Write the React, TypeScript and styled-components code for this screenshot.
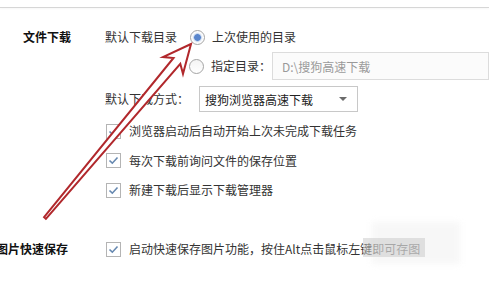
import styled, { createGlobalStyle } from "styled-components";

const GlobalStyle = createGlobalStyle`
  html, body {
    margin: 0;
    padding: 0;
    background: #fff;
  }
  body {
    font-family: "Noto Sans CJK SC", "Noto Sans", "Liberation Sans", sans-serif;
    font-size: 12px;
    color: #333;
  }
`;

const Page = styled.div`
  position: relative;
  width: 497px;
  height: 290px;
  overflow: hidden;
  background: #fff;
`;

const TopRule = styled.div`
  margin-top: 7px;
  width: 489px;
  height: 1px;
  background: #d6d6d6;
  box-shadow: 0 1px 2px rgba(0, 0, 0, 0.05);
`;

const Section = styled.div<{ $top: number }>`
  display: grid;
  grid-template-columns: 105px 1fr;
  margin-top: ${(p) => p.$top}px;
`;

const SectionLabel = styled.div<{ $indent: number }>`
  height: 28px;
  line-height: 28px;
  margin-left: ${(p) => p.$indent}px;
  font-weight: bold;
  color: #111;
  white-space: nowrap;
`;

const Column = styled.div`
  display: flex;
  flex-direction: column;
`;

const Row = styled.div<{ $h: number; $top?: number }>`
  display: flex;
  align-items: center;
  height: ${(p) => p.$h}px;
  margin-top: ${(p) => p.$top ?? 0}px;
  white-space: nowrap;
`;

const Text = styled.span<{ $gap?: number }>`
  margin-right: ${(p) => p.$gap ?? 0}px;
  line-height: 1;
`;

const Radio = styled.span<{ $on?: boolean; $left?: number }>`
  box-sizing: border-box;
  width: 15px;
  height: 15px;
  border-radius: 50%;
  border: 1px solid #a4a4a4;
  background: ${(p) =>
    p.$on
      ? "radial-gradient(circle, #5a86cc 0 3px, #a9c1e6 3.5px, #eef2f8 4.5px, #fff 6px)"
      : "linear-gradient(#f4f4f4, #fff)"};
  margin-left: ${(p) => p.$left ?? 0}px;
  margin-right: 7px;
  flex: none;
`;

const PathInput = styled.div`
  box-sizing: border-box;
  width: 217px;
  height: 28px;
  border: 1px solid #dcdcdc;
  background: #fbfbfb;
  color: #9a9a9a;
  padding-left: 9px;
  display: flex;
  align-items: center;
`;

const Select = styled.div`
  box-sizing: border-box;
  width: 159px;
  height: 26px;
  border: 1px solid #c8c8c8;
  background: #fff;
  color: #222;
  padding: 0 10px 0 5px;
  display: flex;
  align-items: center;
  justify-content: space-between;
  margin-left: 10px;
`;

const Caret = styled.span`
  width: 0;
  height: 0;
  border-left: 4px solid transparent;
  border-right: 4px solid transparent;
  border-top: 4px solid #6b6b6b;
`;

const CheckBox = styled.span`
  box-sizing: border-box;
  width: 15px;
  height: 15px;
  border: 1px solid #b4b4b4;
  background: #fff;
  margin: 0 8px 0 1px;
  display: flex;
  align-items: center;
  justify-content: center;
  flex: none;
`;

const Fade = styled.div`
  position: absolute;
  left: 363px;
  top: 238px;
  width: 62px;
  height: 19px;
  background: rgba(200, 200, 200, 0.5);
`;

const Smudge = styled.div`
  position: absolute;
  left: 372px;
  top: 222px;
  width: 88px;
  height: 42px;
  background: rgba(238, 238, 238, 0.45);
  filter: blur(3px);
`;

const Overlay = styled.svg`
  position: absolute;
  left: 0;
  top: 0;
  pointer-events: none;
`;

function Check() {
  return (
    <CheckBox>
      <svg width="11" height="9" viewBox="0 0 11 9">
        <path d="M1.5 4.5 L4.3 7.2 L9.5 1.5" fill="none" stroke="#6688b0" strokeWidth="1.6" />
      </svg>
    </CheckBox>
  );
}

const checks = [
  "浏览器启动后自动开始上次未完成下载任务",
  "每次下载前询问文件的保存位置",
  "新建下载后显示下载管理器",
];

export default function App() {
  return (
    <Page>
      <GlobalStyle />
      <TopRule />
      <Section $top={15}>
        <SectionLabel $indent={23}>文件下载</SectionLabel>
        <Column>
          <Row $h={28}>
            <Text $gap={13}>默认下载目录</Text>
            <Radio $on />
            <Text>上次使用的目录</Text>
          </Row>
          <Row $h={28} $top={1}>
            <Radio $left={84} />
            <Text $gap={1}>指定目录：</Text>
            <PathInput>D:\搜狗高速下载</PathInput>
          </Row>
          <Row $h={26} $top={6}>
            <Text>默认下载方式：</Text>
            <Select>
              <span>搜狗浏览器高速下载</span>
              <Caret />
            </Select>
          </Row>
          {checks.map((c, i) => (
            <Row key={c} $h={20} $top={i === 0 ? 9 : 9.5}>
              <Check />
              <Text>{c}</Text>
            </Row>
          ))}
        </Column>
      </Section>
      <Section $top={35}>
        <SectionLabel $indent={-4}>图片快速保存</SectionLabel>
        <Column>
          <Row $h={28}>
            <Check />
            <Text>启动快速保存图片功能，按住Alt点击鼠标左键即可存图</Text>
          </Row>
        </Column>
      </Section>
      <Smudge />
      <Fade />
      <Overlay width="497" height="290" viewBox="0 0 497 290">
        <polygon
          points="191,44 163,57 173.5,58 44.1,217.2 45.9,218.8 180.3,63.8 183,73.8"
          fill="#fff"
          stroke="#b1282c"
          strokeWidth="2"
          strokeLinejoin="miter"
        />
      </Overlay>
    </Page>
  );
}
